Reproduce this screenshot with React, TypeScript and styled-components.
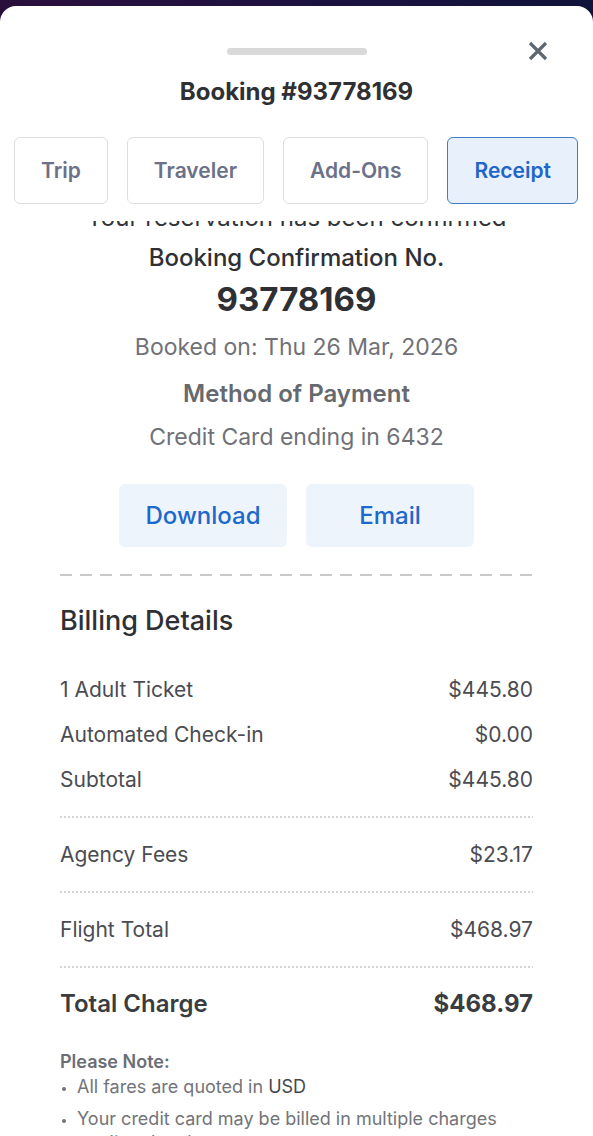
import { useLayoutEffect, useRef } from "react";
import styled, { createGlobalStyle } from "styled-components";

const GlobalStyle = createGlobalStyle`
  html, body {
    margin: 0;
    padding: 0;
    height: 100%;
  }
  body {
    background: linear-gradient(90deg, #2b0f3b 0%, #1d1240 50%, #10133a 100%);
    font-family: Inter, "Noto Sans", Roboto, sans-serif;
    overflow: hidden;
  }
  #root {
    height: 100%;
  }
`;

const Sheet = styled.div`
  margin-top: 6px;
  height: calc(100vh - 6px);
  background: #ffffff;
  border-radius: 16px 16px 0 0;
  display: flex;
  flex-direction: column;
  overflow: hidden;
`;

const HeaderRow = styled.div`
  display: grid;
  grid-template-columns: 1fr auto 1fr;
  align-items: center;
  padding: 34px 44px 0 44px;
  height: 20px;
  box-sizing: content-box;
`;

const Handle = styled.div`
  grid-column: 2;
  width: 140px;
  height: 7px;
  border-radius: 4px;
  background: #d9d9d9;
`;

const CloseButton = styled.button`
  grid-column: 3;
  justify-self: end;
  width: 22px;
  height: 22px;
  padding: 0;
  border: none;
  background: none;
  display: flex;
  align-items: center;
  justify-content: center;
  cursor: pointer;
`;

const Title = styled.h1`
  margin: 18px 0 0;
  text-align: center;
  font-size: 24px;
  line-height: 28px;
  font-weight: 700;
  color: #2e3034;
`;

const Tabs = styled.div`
  display: flex;
  justify-content: space-between;
  padding: 31px 15px 17px 14px;
`;

const Tab = styled.button<{ $active?: boolean }>`
  height: 67px;
  padding: 0 26px;
  border-radius: 6px;
  border: 1.5px solid ${(p) => (p.$active ? "#3f7bc8" : "#dedede")};
  background: ${(p) => (p.$active ? "#e8f0fc" : "#ffffff")};
  color: ${(p) => (p.$active ? "#1e66c9" : "#6c7189")};
  font-family: inherit;
  font-size: 21px;
  font-weight: 600;
`;

const Scroller = styled.div`
  flex: 1;
  overflow-y: auto;
  scrollbar-width: none;
  &::-webkit-scrollbar {
    display: none;
  }
`;

const Content = styled.div`
  padding: 24px 60px 40px;
`;

const Centered = styled.div`
  display: flex;
  flex-direction: column;
  align-items: center;
  text-align: center;
`;

const Line = styled.div<{ $size?: number; $lh?: number; $weight?: number; $color?: string; $gap?: number }>`
  margin-top: ${(p) => p.$gap ?? 0}px;
  font-size: ${(p) => p.$size ?? 23}px;
  line-height: ${(p) => p.$lh ?? 28}px;
  font-weight: ${(p) => p.$weight ?? 400};
  color: ${(p) => p.$color ?? "#333438"};
  white-space: nowrap;
`;

const Actions = styled.div`
  display: flex;
  justify-content: center;
  gap: 19px;
  margin-top: 33px;
`;

const ActionButton = styled.button`
  width: 168px;
  height: 63px;
  border: none;
  border-radius: 6px;
  background: #eef4fc;
  color: #1c68cc;
  font-family: inherit;
  font-size: 24px;
  font-weight: 500;
`;

const DashedRule = styled.div`
  margin-top: 27px;
  height: 2px;
  background: repeating-linear-gradient(90deg, #c9c9c9 0 12px, transparent 12px 20px);
`;

const SectionTitle = styled.h2`
  margin: 29px 0 0;
  font-size: 27px;
  line-height: 32px;
  font-weight: 500;
  color: #2e3034;
`;

const Rows = styled.div`
  margin-top: 39px;
  display: flex;
  flex-direction: column;
  gap: 17px;
`;

const Row = styled.div<{ $strong?: boolean }>`
  display: flex;
  justify-content: space-between;
  font-size: ${(p) => (p.$strong ? 24 : 21)}px;
  line-height: ${(p) => (p.$strong ? 30 : 28)}px;
  font-weight: ${(p) => (p.$strong ? 600 : 400)};
  color: ${(p) => (p.$strong ? "#3a3c40" : "#4b4c51")};
`;

const Amount = styled.span<{ $bold?: boolean }>`
  font-weight: ${(p) => (p.$bold ? 700 : "inherit")};
`;

const DottedRule = styled.div<{ $after?: number }>`
  margin: 22px 0 ${(p) => p.$after ?? 23}px;
  height: 2px;
  background: repeating-linear-gradient(90deg, #d4d4d4 0 2px, transparent 2px 4px);
`;

const NoteTitle = styled.div`
  margin-top: 32px;
  font-size: 18px;
  line-height: 22px;
  font-weight: 600;
  color: #6b6e74;
`;

const NoteList = styled.ul`
  margin: 2px 0 0;
  padding: 0 0 0 17px;
  display: flex;
  flex-direction: column;
  gap: 8px;
  li {
    font-size: 18px;
    line-height: 24px;
    color: #727479;
  }
  li::marker {
    font-size: 13px;
  }
  strong {
    font-weight: 400;
    color: #45474c;
  }
`;

const tabs = ["Trip", "Traveler", "Add-Ons", "Receipt"];

const billing = [
  { label: "1 Adult Ticket", value: "$445.80" },
  { label: "Automated Check-in", value: "$0.00" },
  { label: "Subtotal", value: "$445.80" },
];

export default function App() {
  const scrollRef = useRef<HTMLDivElement>(null);

  useLayoutEffect(() => {
    if (scrollRef.current) scrollRef.current.scrollTop = 41;
  }, []);

  return (
    <>
      <GlobalStyle />
      <Sheet>
        <HeaderRow>
          <Handle />
          <CloseButton aria-label="Close">
            <svg width="20" height="20" viewBox="0 0 20 20">
              <path d="M2 2L18 18M18 2L2 18" stroke="#5d6870" strokeWidth="3.2" />
            </svg>
          </CloseButton>
        </HeaderRow>
        <Title>Booking #93778169</Title>
        <Tabs>
          {tabs.map((t) => (
            <Tab key={t} $active={t === "Receipt"}>
              {t}
            </Tab>
          ))}
        </Tabs>
        <Scroller ref={scrollRef}>
          <Content>
            <Centered>
              <Line $size={24}>Your reservation has been confirmed</Line>
              <Line $gap={12} $size={24} $weight={500} $color="#2e3034">
                Booking Confirmation No.
              </Line>
              <Line $gap={7} $size={33} $lh={40} $weight={700} $color="#2e3034">
                93778169
              </Line>
              <Line $gap={14} $color="#707176">
                Booked on: Thu 26 Mar, 2026
              </Line>
              <Line $gap={19} $size={24} $weight={600} $color="#66696e">
                Method of Payment
              </Line>
              <Line $gap={15} $color="#707176">
                Credit Card ending in 6432
              </Line>
            </Centered>
            <Actions>
              <ActionButton>Download</ActionButton>
              <ActionButton>Email</ActionButton>
            </Actions>
            <DashedRule />
            <SectionTitle>Billing Details</SectionTitle>
            <Rows>
              {billing.map((b) => (
                <Row key={b.label}>
                  <span>{b.label}</span>
                  <Amount>{b.value}</Amount>
                </Row>
              ))}
            </Rows>
            <DottedRule />
            <Row>
              <span>Agency Fees</span>
              <Amount>$23.17</Amount>
            </Row>
            <DottedRule />
            <Row>
              <span>Flight Total</span>
              <Amount>$468.97</Amount>
            </Row>
            <DottedRule $after={21} />
            <Row $strong>
              <span>Total Charge</span>
              <Amount $bold>$468.97</Amount>
            </Row>
            <NoteTitle>Please Note:</NoteTitle>
            <NoteList>
              <li>
                All fares are quoted in <strong>USD</strong>
              </li>
              <li>Your credit card may be billed in multiple charges totaling the above amount.</li>
            </NoteList>
          </Content>
        </Scroller>
      </Sheet>
    </>
  );
}
